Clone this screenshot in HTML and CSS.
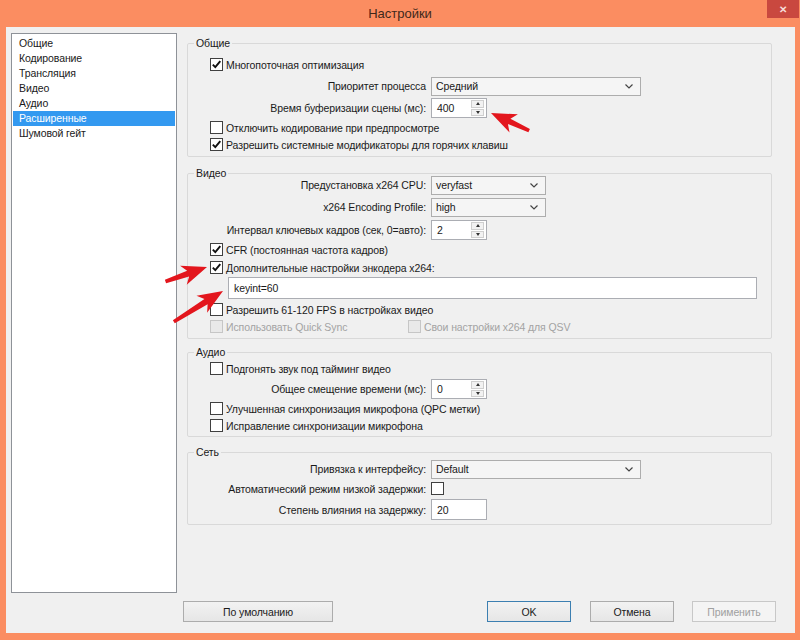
FILE: index.html
```html
<!DOCTYPE html>
<html lang="ru">
<head>
  <meta charset="utf-8">
  <title>Настройки</title>
  <link rel="stylesheet" href="styles.css">
</head>
<body>

  <div class="window">
    <div class="titlebar">
      <span></span>
      <span class="title">Настройки</span>
      <span class="close">&#x2715;</span>
    </div>

    <div class="client">
      <div class="panes">
        <ul class="nav">
          <li>Общие</li>
          <li>Кодирование</li>
          <li>Трансляция</li>
          <li>Видео</li>
          <li>Аудио</li>
          <li class="active">Расширенные</li>
          <li>Шумовой гейт</li>
        </ul>

        <div class="main">
          <!-- Общие -->
          <fieldset class="group g-general">
            <legend>Общие</legend>
            <div class="row">
              <span class="cb checked"><svg viewBox="0 0 11 11"><path d="M1.8 5.6 L4.3 8.2 L9.3 2.2"/></svg></span>
              <span>Многопоточная оптимизация</span>
            </div>
            <div class="frow mt2">
              <span class="lbl">Приоритет процесса</span>
              <div class="select wide"><span>Средний</span><svg viewBox="0 0 8 5"><path d="M0.5 0.5 L4 4 L7.5 0.5"/></svg></div>
            </div>
            <div class="frow">
              <span class="lbl">Время буферизации сцены (мс):</span>
              <div class="spin"><span class="val">400</span><div class="btns"><span class="b up"></span><span class="b down"></span></div></div>
            </div>
            <div class="row">
              <span class="cb"></span>
              <span>Отключить кодирование при предпросмотре</span>
            </div>
            <div class="row">
              <span class="cb checked"><svg viewBox="0 0 11 11"><path d="M1.8 5.6 L4.3 8.2 L9.3 2.2"/></svg></span>
              <span>Разрешить системные модификаторы для горячих клавиш</span>
            </div>
          </fieldset>

          <!-- Видео -->
          <fieldset class="group g-video">
            <legend>Видео</legend>
            <div class="frow mtn6">
              <span class="lbl">Предустановка x264 CPU:</span>
              <div class="select narrow"><span>veryfast</span><svg viewBox="0 0 8 5"><path d="M0.5 0.5 L4 4 L7.5 0.5"/></svg></div>
            </div>
            <div class="frow">
              <span class="lbl">x264 Encoding Profile:</span>
              <div class="select narrow"><span>high</span><svg viewBox="0 0 8 5"><path d="M0.5 0.5 L4 4 L7.5 0.5"/></svg></div>
            </div>
            <div class="frow mt1">
              <span class="lbl">Интервал ключевых кадров (сек, 0=авто):</span>
              <div class="spin"><span class="val">2</span><div class="btns"><span class="b up"></span><span class="b down"></span></div></div>
            </div>
            <div class="row">
              <span class="cb checked"><svg viewBox="0 0 11 11"><path d="M1.8 5.6 L4.3 8.2 L9.3 2.2"/></svg></span>
              <span>CFR (постоянная частота кадров)</span>
            </div>
            <div class="row mt1">
              <span class="cb checked"><svg viewBox="0 0 11 11"><path d="M1.8 5.6 L4.3 8.2 L9.3 2.2"/></svg></span>
              <span>Дополнительные настройки энкодера x264:</span>
            </div>
            <div class="textline">
              <div class="input long">keyint=60</div>
            </div>
            <div class="row mt2">
              <span class="cb"></span>
              <span>Разрешить 61-120 FPS в настройках видео</span>
            </div>
            <div class="row disabled">
              <span class="pair">
                <span class="cb"></span>
                <span>Использовать Quick Sync</span>
              </span>
              <span class="pair">
                <span class="cb"></span>
                <span>Свои настройки x264 для QSV</span>
              </span>
            </div>
          </fieldset>

          <!-- Аудио -->
          <fieldset class="group g-audio">
            <legend>Аудио</legend>
            <div class="row">
              <span class="cb"></span>
              <span>Подгонять звук под тайминг видео</span>
            </div>
            <div class="frow mt1">
              <span class="lbl">Общее смещение времени (мс):</span>
              <div class="spin"><span class="val">0</span><div class="btns"><span class="b up"></span><span class="b down"></span></div></div>
            </div>
            <div class="row">
              <span class="cb"></span>
              <span>Улучшенная синхронизация микрофона (QPC метки)</span>
            </div>
            <div class="row">
              <span class="cb"></span>
              <span>Исправление синхронизации микрофона</span>
            </div>
          </fieldset>

          <!-- Сеть -->
          <fieldset class="group g-net">
            <legend>Сеть</legend>
            <div class="frow mtn1">
              <span class="lbl">Привязка к интерфейсу:</span>
              <div class="select wide"><span>Default</span><svg viewBox="0 0 8 5"><path d="M0.5 0.5 L4 4 L7.5 0.5"/></svg></div>
            </div>
            <div class="frow short">
              <span class="lbl">Автоматический режим низкой задержки:</span>
              <span class="cb"></span>
            </div>
            <div class="frow tall mt1">
              <span class="lbl">Степень влияния на задержку:</span>
              <div class="input short">20</div>
            </div>
          </fieldset>
        </div>
      </div>

      <div class="footer">
        <button class="btn wide">По умолчанию</button>
        <button class="btn ok">OK</button>
        <button class="btn cancel">Отмена</button>
        <button class="btn apply" disabled>Применить</button>
      </div>
    </div>

    <svg class="marks" viewBox="0 0 800 640">
      <path transform="translate(491 113) rotate(204.7)" d="M0 0 L-25 -10 L-20 -3 L-42 -1.8 L-42 1.8 L-20 3 L-25 10 Z"/>
      <path transform="translate(207 267) rotate(-19.3)" d="M0 0 L-25 -10 L-20 -3 L-44 -1.8 L-44 1.8 L-20 3 L-25 10 Z"/>
      <path transform="translate(223 291) rotate(-32)" d="M0 0 L-25 -10 L-20 -3 L-58 -1.8 L-58 1.8 L-20 3 L-25 10 Z"/>
    </svg>
  </div>

</body>
</html>
```

FILE: styles.css
```css
body {
  margin: 0;
  font-family: "Liberation Sans", Arial, sans-serif;
  font-size: 10.5px;
  letter-spacing: -0.1px;
  color: #1a1a1a;
}

.window {
  position: relative;
  width: 800px;
  height: 640px;
  background-color: #fb8d61;
  overflow: hidden;
}

.titlebar {
  display: grid;
  grid-template-columns: 1fr auto 1fr;
  height: 27px;
}

.title {
  align-self: center;
  font-size: 13px;
  letter-spacing: 0;
  color: #40281a;
}

.close {
  justify-self: end;
  width: 32px;
  height: 18px;
  margin-right: 1px;
  background-color: #c9483f;
  color: #f6dcd8;
  font-size: 10px;
  font-weight: bold;
  display: flex;
  align-items: center;
  justify-content: center;
}

.client {
  margin: 0 5px 0 6px;
  height: 606px;
  background-color: #f0f0f0;
}

.panes {
  display: flex;
  align-items: flex-start;
  padding: 6px 0 0 5px;
}

.nav {
  list-style: none;
  margin: 0;
  padding: 2px 1px;
  width: 166px;
  height: 560px;
  box-sizing: border-box;
  background-color: white;
  border: 1px solid #8e9298;
}

.nav li {
  height: 15px;
  line-height: 15px;
  padding-left: 6px;
}

.nav li.active {
  background-color: #3399f0;
  color: white;
}

.main {
  margin-left: 10px;
  padding-top: 4px;
}

/* group boxes */
.group {
  width: 585px;
  box-sizing: border-box;
  margin: 0;
  padding: 0 0 3px 0;
  border: 1px solid #d9d9d9;
  border-radius: 2px;
}

.group legend {
  margin-left: 6px;
  padding: 0 2px;
  line-height: 13px;
}

.g-general { padding-top: 6px; }
.g-video { margin-top: 10px; }
.g-audio { margin-top: 7px; padding-top: 1px; padding-bottom: 2px; }
.g-net { margin-top: 9px; }

.mt1 { margin-top: 1px; }
.mt2 { margin-top: 2px; }
.mtn1 { margin-top: -1px; }
.mtn6 { margin-top: -6px; }

.row {
  display: flex;
  align-items: center;
  gap: 3px;
  height: 17px;
  padding-left: 22px;
  white-space: nowrap;
}

.row.disabled {
  color: #a3a3a3;
  gap: 0;
}

.pair {
  display: flex;
  align-items: center;
  gap: 3px;
  width: 198px;
}

.frow {
  display: grid;
  grid-template-columns: 238px auto;
  column-gap: 5px;
  align-items: center;
  justify-items: start;
  height: 22px;
}

.frow.short { height: 17px; }
.frow.tall { height: 23px; }

.frow .lbl {
  justify-self: end;
  white-space: nowrap;
}

/* checkbox */
.cb {
  width: 13px;
  height: 13px;
  box-sizing: border-box;
  border: 1px solid #404040;
  background-color: white;
  display: inline-flex;
  flex-shrink: 0;
}

.cb svg {
  width: 11px;
  height: 11px;
  fill: none;
  stroke: #111;
  stroke-width: 1.9;
}

.disabled .cb {
  border-color: #c6c6c6;
  background-color: #e9e9e9;
}

/* combobox */
.select {
  display: flex;
  align-items: center;
  justify-content: space-between;
  height: 19px;
  box-sizing: border-box;
  border: 1px solid #adadad;
  background-color: #f5f5f5;
  padding: 0 7px 0 4px;
}

.select.wide { width: 210px; }
.select.narrow { width: 115px; }

.select svg {
  width: 8px;
  height: 5px;
  fill: none;
  stroke: #444;
  stroke-width: 1.2;
}

/* spin box */
.spin {
  display: flex;
  width: 56px;
  height: 20px;
  box-sizing: border-box;
  border: 1px solid #abadb3;
  background-color: white;
}

.spin .val {
  flex: 1;
  padding-left: 5px;
  line-height: 18px;
}

.spin .btns {
  display: flex;
  flex-direction: column;
  gap: 1px;
  width: 13px;
  padding: 1px 2px 1px 0;
}

.spin .b {
  flex: 1;
  border: 1px solid #cfcfcf;
  background-color: #f2f2f2;
  display: flex;
  align-items: center;
  justify-content: center;
}

.spin .up::after {
  content: "";
  border-left: 2.5px solid transparent;
  border-right: 2.5px solid transparent;
  border-bottom: 3px solid #333;
}

.spin .down::after {
  content: "";
  border-left: 2.5px solid transparent;
  border-right: 2.5px solid transparent;
  border-top: 3px solid #333;
}

/* text fields */
.textline {
  height: 23px;
  padding-left: 40px;
  display: flex;
  align-items: center;
}

.input {
  height: 21px;
  box-sizing: border-box;
  border: 1px solid #abadb3;
  background-color: white;
  padding-left: 5px;
  display: flex;
  align-items: center;
}

.input.long { width: 529px; height: 22px; }
.input.short { width: 56px; }

/* bottom buttons */
.footer {
  display: flex;
  margin-top: 8px;
  padding: 0 19px 0 177px;
}

.btn {
  height: 21px;
  width: 84px;
  padding: 0;
  font-family: inherit;
  font-size: 10.5px;
  letter-spacing: -0.1px;
  color: #1a1a1a;
  border: 1px solid #acacac;
  background: linear-gradient(#f2f2f2, #e6e6e6);
}

.btn.wide { width: 150px; }
.btn.ok { margin-left: auto; border-color: #3c7fb1; }
.btn.cancel { margin-left: 19px; }

.btn.apply {
  margin-left: 18px;
  color: #a0a0a0;
  border-color: #c8c8c8;
  background: #f4f4f4;
}

/* red annotation arrows drawn over the dialog */
.marks {
  position: absolute;
  top: 0;
  left: 0;
  width: 800px;
  height: 640px;
  pointer-events: none;
}

.marks path {
  fill: #e3161d;
}
```
